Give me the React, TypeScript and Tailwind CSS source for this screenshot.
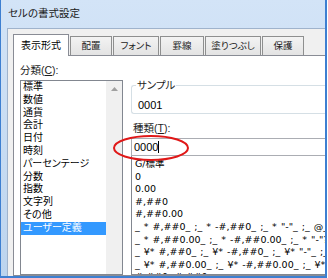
import React from 'react'

const categories = [
  '標準',
  '数値',
  '通貨',
  '会計',
  '日付',
  '時刻',
  'パーセンテージ',
  '分数',
  '指数',
  '文字列',
  'その他',
  'ユーザー定義',
]

const formats = [
  'G/標準',
  '0',
  '0.00',
  '#,##0',
  '#,##0.00',
  '_ * #,##0_ ;_ * -#,##0_ ;_ * "-"_ ;_ @_ ',
  '_ * #,##0.00_ ;_ * -#,##0.00_ ;_ * "-"??_ ;_ @_ ',
  '_ ¥* #,##0_ ;_ ¥* -#,##0_ ;_ ¥* "-"_ ;_ @_ ',
  '_ ¥* #,##0.00_ ;_ ¥* -#,##0.00_ ;_ ¥* "-"??_ ;_ @_ ',
  '#,##0;-#,##0',
]

const tabs = ['表示形式', '配置', 'フォント', '罫線', '塗りつぶし', '保護']
const tabWidths = ['w-[56px]', 'w-[42px]', 'w-[46px]', 'w-[44px]', 'w-[56px]', 'w-[42px]']

export default function App() {
  return (
    <div className="w-[328px] h-[278px] bg-white overflow-hidden [font-family:'Liberation_Sans','Noto_Sans_CJK_JP',sans-serif] [font-feature-settings:'palt'] text-black">
      <div className="w-[327px] h-[278px] border-l border-r-2 border-b-2 border-[#3d7fd1] flex flex-col overflow-hidden">
        <div className="flex-1 flex flex-col bg-gradient-to-b from-[#d3e4f7] to-[#bcd4ee] pl-[6px] overflow-hidden">
          {/* title bar */}
          <div className="h-[28px] shrink-0 flex items-center pl-[1px] text-[10.5px] text-[#1a1a1a]">
            セルの書式設定
          </div>

          {/* client area */}
          <div className="relative flex-1 bg-[#f0f0f0] border-l border-t border-[#9fb3cc] pl-[5px] pt-[4px] flex flex-col overflow-hidden">
            <div className="flex items-end h-[22px] shrink-0">
              {tabs.map((t, i) =>
                i === 0 ? (
                  <div
                    key={t}
                    className={`${tabWidths[i]} h-[22px] bg-white border border-b-0 border-[#898c95] flex items-center justify-center text-[10px] relative z-10 -mb-px pb-[1px]`}
                  >
                    {t}
                  </div>
                ) : (
                  <div
                    key={t}
                    className={`${tabWidths[i]} h-[19px] ml-[1px] bg-gradient-to-b from-[#f3f3f3] to-[#e3e3e3] border border-b-0 border-[#8e8f8f] flex items-center justify-center text-[9.5px] text-[#222]`}
                  >
                    {t}
                  </div>
                )
              )}
            </div>

            {/* tab panel */}
            <div className="flex-1 bg-white border border-[#898c95] border-r-0 pl-[6px] pt-[7px] flex gap-[8px] overflow-hidden">
              {/* category column */}
              <div className="w-[103px] shrink-0 flex flex-col">
                <div className="h-[14px] text-[10.5px] leading-[14px] text-[#1e1e1e]">
                  分類(<span className="underline">C</span>):
                </div>
                <div className="mt-[3px] flex-1 border border-[#828790] flex">
                  <div className="flex-1">
                    {categories.map((c, i) => (
                      <div
                        key={c}
                        className={`h-[12.8px] leading-[12.8px] pl-[2px] text-[10px] ${
                          i === categories.length - 1 ? 'bg-[#3399ff] text-white' : ''
                        }`}
                      >
                        {c}
                      </div>
                    ))}
                  </div>
                  <div className="w-[16px] bg-[#f0f0f0] flex justify-center pt-[6px]">
                    <svg width="7" height="4" viewBox="0 0 7 4">
                      <path d="M0 4 L3.5 0 L7 4 Z" fill="#a0a0a0" />
                    </svg>
                  </div>
                </div>
              </div>

              {/* format column */}
              <div className="flex-1 flex flex-col min-w-0">
                <div className="relative mt-[22px] h-[29px] shrink-0 border border-[#d5dfe5] border-r-0 rounded-l-[3px]">
                  <span className="absolute -top-[8px] left-[4px] bg-white px-[1px] text-[10.5px] leading-[14px] text-[#1e1e1e]">
                    サンプル
                  </span>
                  <div className="pl-[6px] pt-[12px] text-[11px] leading-[14px]">0001</div>
                </div>
                <div className="mt-[7px] pl-[2px] h-[14px] shrink-0 text-[10.5px] leading-[14px] text-[#1e1e1e]">
                  種類(<span className="underline">T</span>):
                </div>
                <div className="mt-[3px] h-[18px] shrink-0 border border-[#abadb3] border-r-0 pl-[2px] flex items-center text-[11px]">
                  0000<span className="w-px h-[12px] bg-black"></span>
                </div>
                <div className="flex-1 border border-t-0 border-r-0 border-[#828790] pl-[3px] pt-[2px] overflow-hidden [font-family:'DejaVu_Sans','Noto_Sans_CJK_JP',sans-serif]">
                  {formats.map((f) => (
                    <div key={f} className="h-[12.6px] leading-[12.6px] text-[9.5px] whitespace-pre [word-spacing:1px]">
                      {f}
                    </div>
                  ))}
                </div>
              </div>
            </div>

            {/* red highlight ellipse */}
            <svg
              className="absolute left-[104px] top-[105px] pointer-events-none"
              width="78"
              height="28"
              viewBox="0 0 78 28"
            >
              <ellipse cx="39" cy="14" rx="37" ry="12" fill="none" stroke="#e01818" strokeWidth="2" />
            </svg>
          </div>
        </div>
      </div>
    </div>
  )
}
